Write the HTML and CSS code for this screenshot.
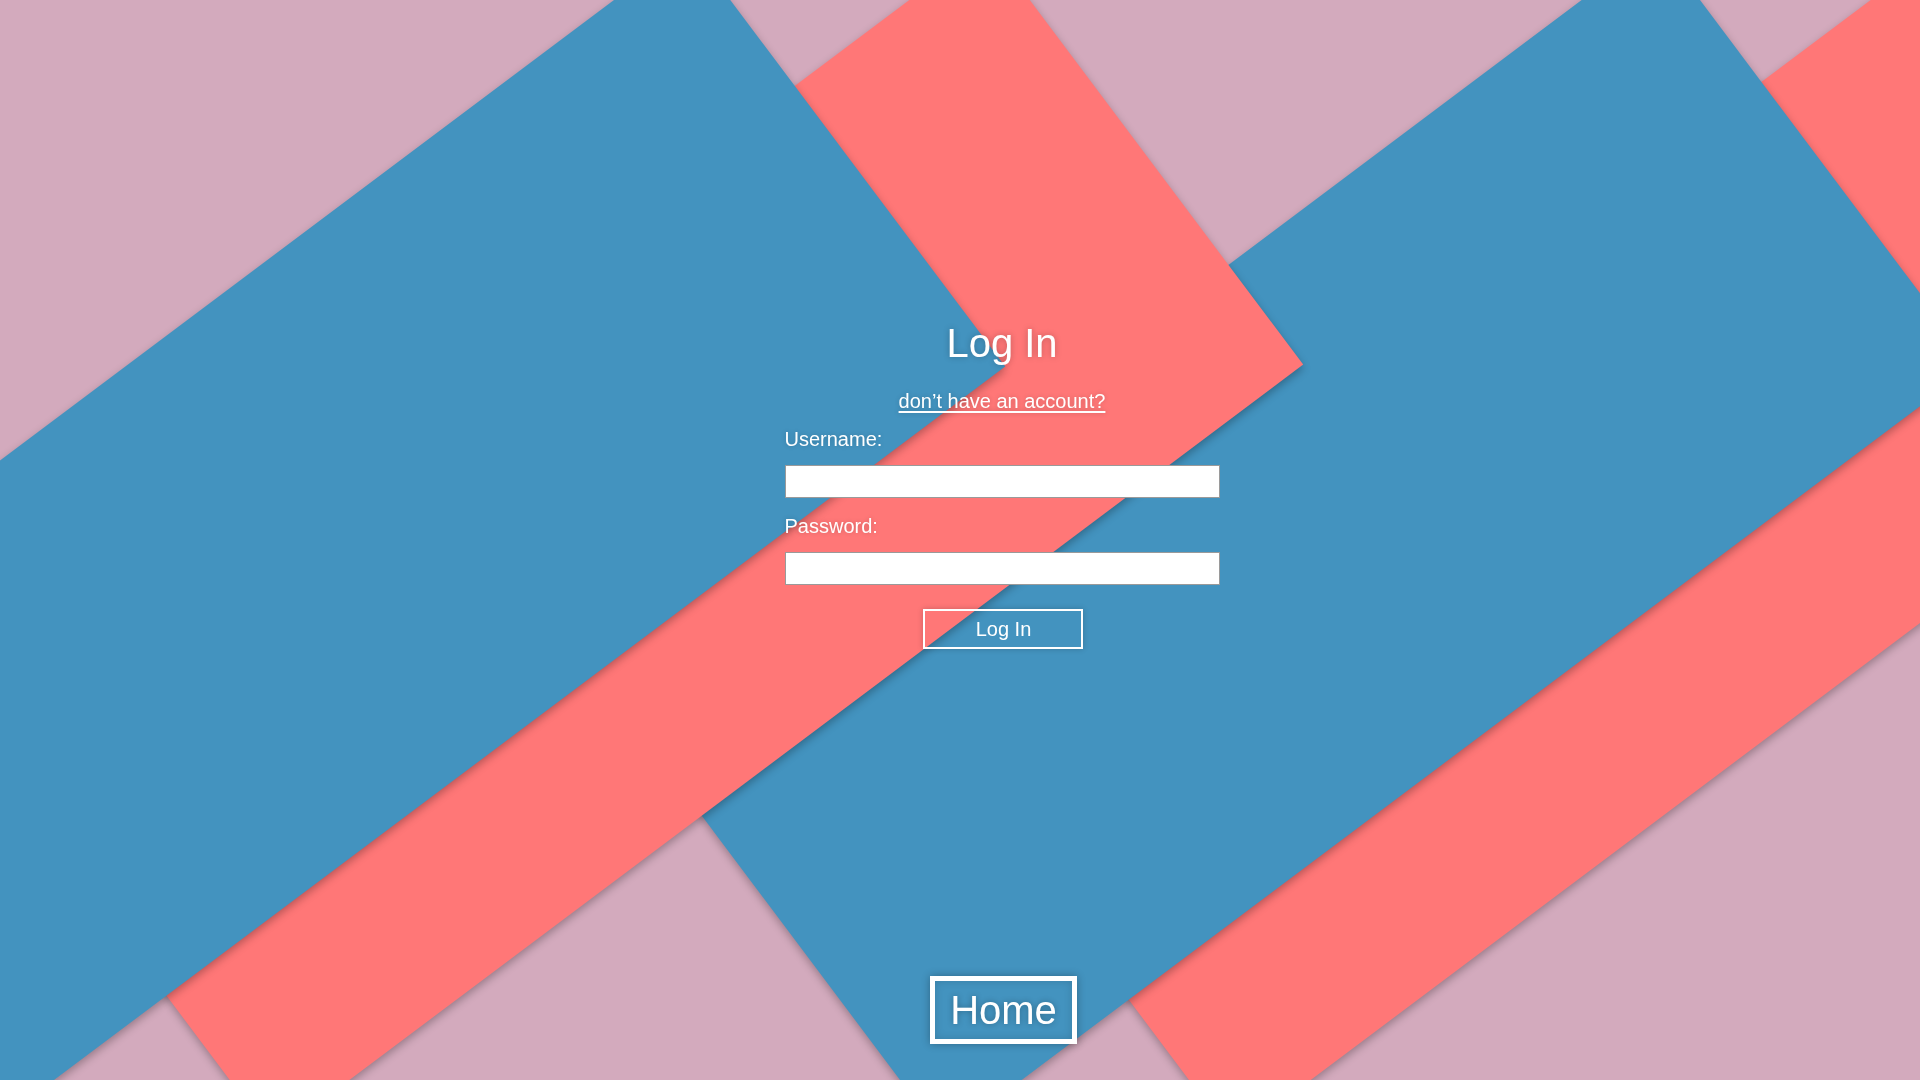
FILE: index.html
```html
<!DOCTYPE html>
<html lang="en">
<head>
<meta charset="utf-8">
<title>Log In</title>
<link rel="stylesheet" href="styles.css">
</head>
<body>
<div class="bg" aria-hidden="true">
  <div class="shape shape-c2"></div>
  <div class="shape shape-b"></div>
  <div class="shape shape-c1"></div>
  <div class="shape shape-a"></div>
</div>
<div class="page">
  <form class="login" onsubmit="return false;">
    <h1 class="title">Log In</h1>
    <a class="signup" href="#">don’t have an account?</a>
    <label class="label" for="username">Username:</label>
    <input class="field" id="username" type="text">
    <label class="label label-pass" for="password">Password:</label>
    <input class="field" id="password" type="password">
    <button class="submit" type="submit">Log In</button>
  </form>
  <a class="home" href="#">Home</a>
</div>
</body>
</html>
```
FILE: styles.css
```css
html, body {
  margin: 0;
  padding: 0;
  height: 100%;
}

body {
  font-family: "Liberation Sans", Arial, sans-serif;
  background: #d3aabd;
  color: #fff;
  overflow: hidden;
}

.bg {
  position: fixed;
  left: 0;
  top: 0;
  width: 100%;
  height: 100%;
  overflow: hidden;
}

.shape {
  position: absolute;
  width: 1288px;
  height: 528px;
  transform-origin: 0 0;
  transform: rotate(-36.87deg);
  box-shadow: -2px 3px 8px rgba(0, 0, 0, 0.28);
}

.shape-a { left: -342px; top: 717px; background: #4393bf; }
.shape-c1 { left: -44px; top: 715px; background: #ff7777; }
.shape-b { left: 627px; top: 716px; background: #4393bf; }
.shape-c2 { left: 916px; top: 716px; background: #ff7777; }

.page {
  position: relative;
  box-sizing: border-box;
  min-height: 100vh;
  padding-left: 84px;
  display: flex;
  flex-direction: column;
  align-items: center;
}

.login {
  width: 435px;
  padding-top: 319px;
  display: flex;
  flex-direction: column;
}

.title {
  margin: 0;
  font-size: 40px;
  line-height: 48px;
  font-weight: normal;
  text-align: center;
  text-shadow: 0 0 6px rgba(0, 0, 0, 0.25);
}

.signup {
  align-self: center;
  margin-top: 22px;
  font-size: 20px;
  line-height: 24px;
  color: #fff;
  text-decoration: underline;
  text-underline-offset: 3px;
  text-shadow: 0 0 5px rgba(0, 0, 0, 0.2);
}

.label {
  margin-top: 14px;
  font-size: 20px;
  line-height: 24px;
  text-shadow: 0 0 5px rgba(0, 0, 0, 0.2);
}

.label-pass {
  margin-top: 16px;
}

.field {
  box-sizing: border-box;
  margin: 14px 0 0;
  width: 435px;
  height: 33px;
  border: 1px solid #9a9a9a;
  background: #fff;
  padding: 0 6px;
  font-family: inherit;
  font-size: 16px;
  outline: none;
}

.submit {
  align-self: center;
  box-sizing: border-box;
  margin: 24px 0 0 1px;
  width: 160px;
  height: 40px;
  padding: 0 0 0 2px;
  border: 2px solid #fff;
  background: transparent;
  color: #fff;
  font-family: inherit;
  font-size: 20px;
  line-height: 24px;
  cursor: pointer;
  box-shadow: 0 0 6px rgba(0, 0, 0, 0.2);
}

.home {
  margin-top: auto;
  margin-bottom: 36px;
  margin-left: 3px;
  border: 5px solid #fff;
  padding: 6px 15px;
  font-size: 40px;
  line-height: 46px;
  color: #fff;
  text-decoration: none;
  box-shadow: 0 0 8px rgba(0, 0, 0, 0.3), inset 0 0 8px rgba(0, 0, 0, 0.15);
  text-shadow: 0 0 6px rgba(0, 0, 0, 0.3);
}
```
